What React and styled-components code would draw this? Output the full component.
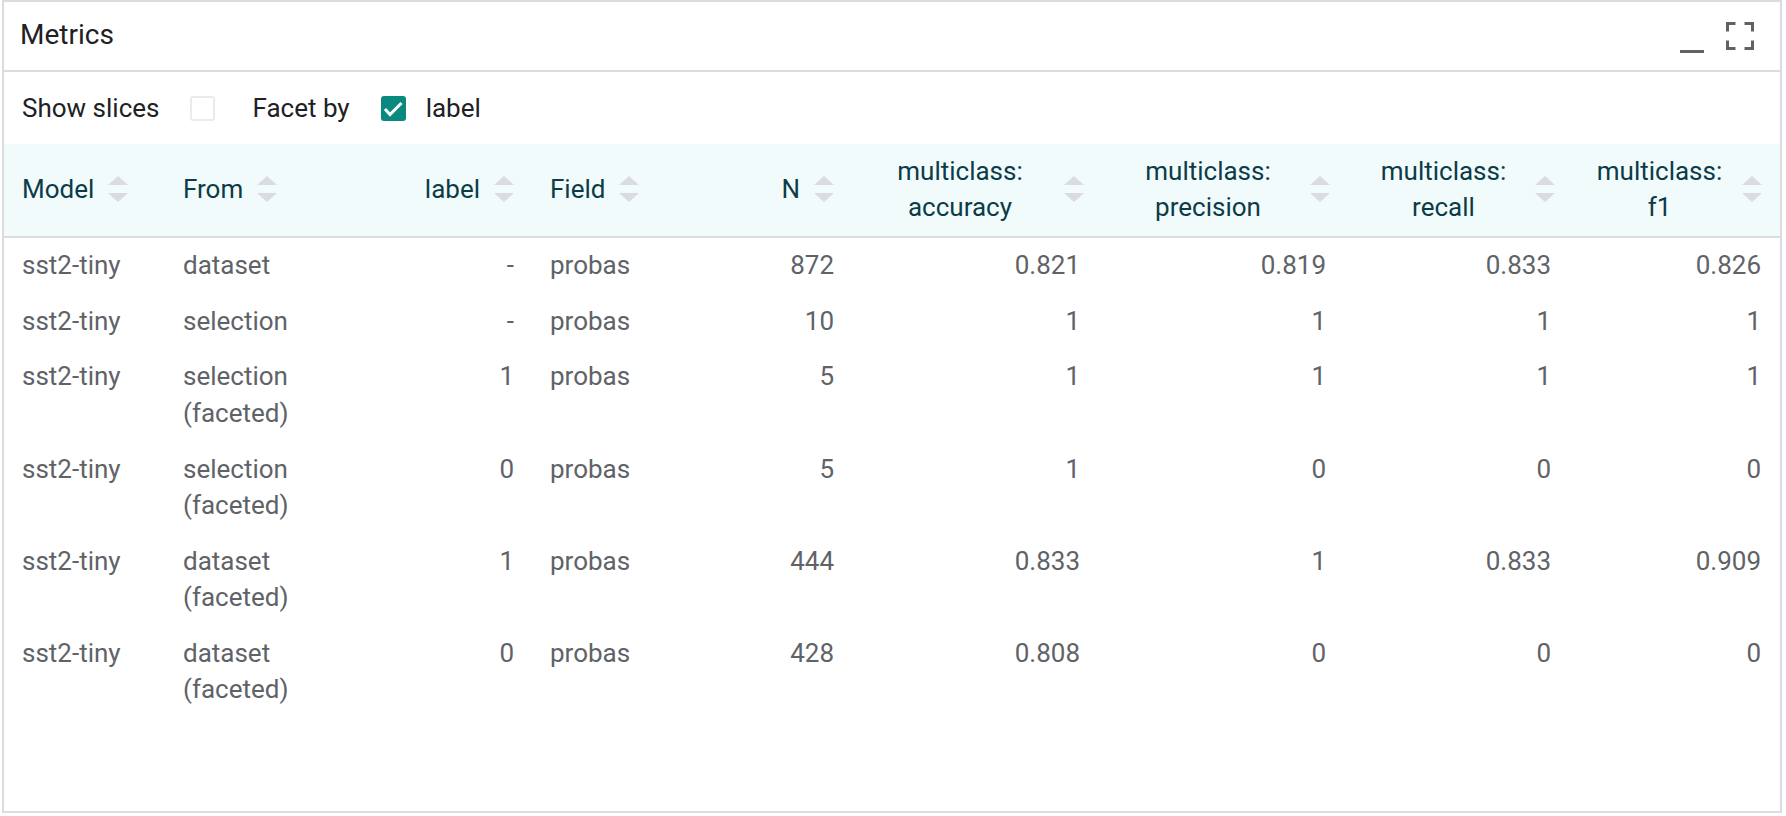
import React from "react";
import styled, { createGlobalStyle } from "styled-components";

const GlobalStyle = createGlobalStyle`
  html, body {
    margin: 0;
    padding: 0;
    background: #ffffff;
  }
  body {
    font-family: Roboto, "Liberation Sans", sans-serif;
  }
`;

const Panel = styled.div`
  box-sizing: border-box;
  width: 1780px;
  height: 813px;
  margin-left: 2px;
  border: 2px solid #dadce0;
  display: flex;
  flex-direction: column;
  background: #fff;
`;

const TitleBar = styled.div`
  box-sizing: border-box;
  height: 70px;
  padding: 0 26px 0 16px;
  border-bottom: 2px solid #dadce0;
  display: flex;
  align-items: center;
  justify-content: space-between;
`;

const Title = styled.div`
  font-size: 28px;
  color: #202124;
  margin-bottom: 4px;
`;

const WindowIcons = styled.div`
  display: flex;
  align-items: flex-start;
  gap: 22px;
  margin-top: 3px;
`;

const Toolbar = styled.div`
  height: 72px;
  padding-left: 18px;
  display: flex;
  align-items: center;
  font-size: 26px;
  color: #202124;
`;

const ToolLabel = styled.span`
  margin-right: ${({ $gap }) => $gap}px;
`;

const Box = styled.span`
  box-sizing: border-box;
  width: 25px;
  height: 25px;
  border-radius: 3px;
  margin-right: ${({ $gap }) => $gap}px;
  display: inline-flex;
  align-items: center;
  justify-content: center;
  background: ${({ $checked }) => ($checked ? "#0a897f" : "#fff")};
  border: 2px solid ${({ $checked }) => ($checked ? "#0a897f" : "#ebebeb")};
`;

const Table = styled.table`
  width: 100%;
  table-layout: fixed;
  border-collapse: collapse;
  font-size: 26px;
`;

const Col = styled.col`
  width: ${({ $w }) => $w}px;
`;

const HeadRow = styled.tr`
  background: #f2fbfb;
  border-bottom: 2px solid #dadce0;
`;

const Th = styled.th`
  box-sizing: border-box;
  height: 93px;
  padding: 0 18px 3px;
  font-weight: 400;
  color: #0b3c48;
  line-height: 36px;
  vertical-align: middle;
`;

const HeadInner = styled.div`
  display: flex;
  align-items: center;
  gap: 14px;
  justify-content: ${({ $align }) => ($align === "right" ? "flex-end" : "flex-start")};
`;

const HeadText = styled.div`
  flex: ${({ $wide }) => ($wide ? 1 : "none")};
  text-align: ${({ $wide }) => ($wide ? "center" : "left")};
  white-space: nowrap;
`;

const Td = styled.td`
  padding: 9px ${({ $pad }) => $pad}px 10.2px 18px;
  line-height: 36.5px;
  color: #5f6368;
  vertical-align: top;
  text-align: ${({ $align }) => $align};
`;

const SortIcon = () => (
  <svg width="20" height="26" viewBox="0 0 20 26">
    <path d="M0 9 L10 0 L20 9 Z" fill="#dadce0" />
    <path d="M0 17 L20 17 L10 26 Z" fill="#dadce0" />
  </svg>
);

const columns = [
  { w: 161, title: ["Model"], align: "left", pad: 18 },
  { w: 165, title: ["From"], align: "left", pad: 18 },
  { w: 202, title: ["label"], align: "right", pad: 18 },
  { w: 158, title: ["Field"], align: "left", pad: 18 },
  { w: 162, title: ["N"], align: "right", pad: 18 },
  { w: 250, title: ["multiclass:", "accuracy"], align: "right", wide: true, pad: 22 },
  { w: 246, title: ["multiclass:", "precision"], align: "right", wide: true, pad: 22 },
  { w: 225, title: ["multiclass:", "recall"], align: "right", wide: true, pad: 22 },
  { w: 207, title: ["multiclass:", "f1"], align: "right", wide: true, pad: 19 },
];

const rows = [
  ["sst2-tiny", "dataset", "-", "probas", "872", "0.821", "0.819", "0.833", "0.826"],
  ["sst2-tiny", "selection", "-", "probas", "10", "1", "1", "1", "1"],
  ["sst2-tiny", "selection (faceted)", "1", "probas", "5", "1", "1", "1", "1"],
  ["sst2-tiny", "selection (faceted)", "0", "probas", "5", "1", "0", "0", "0"],
  ["sst2-tiny", "dataset (faceted)", "1", "probas", "444", "0.833", "1", "0.833", "0.909"],
  ["sst2-tiny", "dataset (faceted)", "0", "probas", "428", "0.808", "0", "0", "0"],
];

const App = () => {
  return (
    <>
      <GlobalStyle />
      <Panel>
        <TitleBar>
          <Title>Metrics</Title>
          <WindowIcons>
            <svg width="24" height="31" viewBox="0 0 24 31">
              <rect x="0" y="28" width="24" height="3" fill="#5f6368" />
            </svg>
            <svg width="28" height="28" viewBox="0 0 28 28">
              <path
                d="M1.5 9.5V1.5H9.5 M18.5 1.5H26.5V9.5 M26.5 18.5V26.5H18.5 M9.5 26.5H1.5V18.5"
                fill="none"
                stroke="#5f6368"
                strokeWidth="3"
              />
            </svg>
          </WindowIcons>
        </TitleBar>

        <Toolbar>
          <ToolLabel $gap={31}>Show slices</ToolLabel>
          <Box $gap={37} />
          <ToolLabel $gap={31}>Facet by</ToolLabel>
          <Box $checked $gap={20}>
            <svg width="21" height="21" viewBox="0 0 21 21">
              <path d="M2 11 L7 16.5 L18.5 5" fill="none" stroke="#fff" strokeWidth="3" />
            </svg>
          </Box>
          <ToolLabel $gap={0}>label</ToolLabel>
        </Toolbar>

        <Table>
          <colgroup>
            {columns.map((c, i) => (
              <Col key={i} $w={c.w} />
            ))}
          </colgroup>
          <thead>
            <HeadRow>
              {columns.map((c, i) => (
                <Th key={i}>
                  <HeadInner $align={c.align}>
                    <HeadText $wide={c.wide}>
                      {c.title.map((line) => (
                        <div key={line}>{line}</div>
                      ))}
                    </HeadText>
                    <SortIcon />
                  </HeadInner>
                </Th>
              ))}
            </HeadRow>
          </thead>
          <tbody>
            {rows.map((r, ri) => (
              <tr key={ri}>
                {r.map((v, ci) => (
                  <Td key={ci} $align={columns[ci].align} $pad={columns[ci].pad}>
                    {v}
                  </Td>
                ))}
              </tr>
            ))}
          </tbody>
        </Table>
      </Panel>
    </>
  );
};

export default App;
